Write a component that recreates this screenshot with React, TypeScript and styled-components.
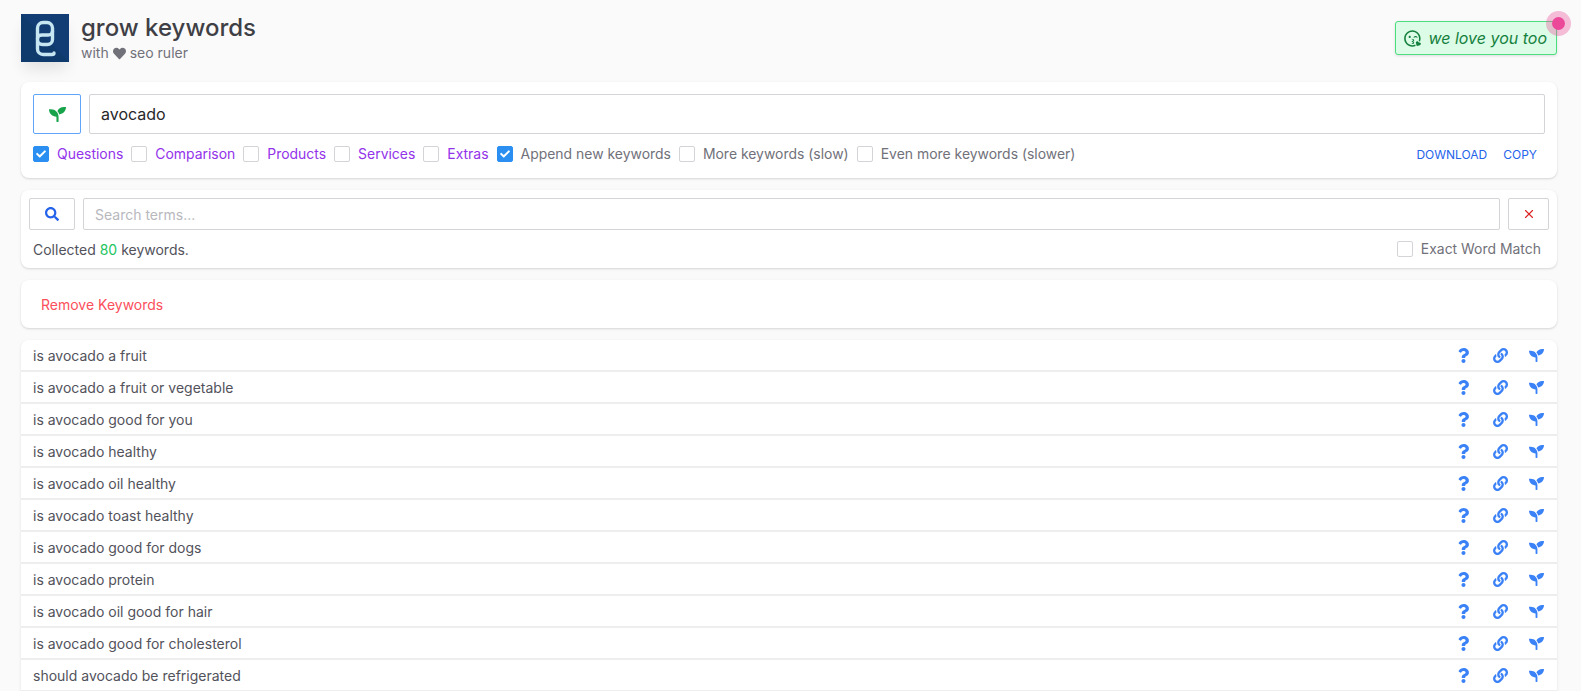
import { createGlobalStyle, styled } from 'styled-components';
import {
  FaCheck,
  FaHeart,
  FaLink,
  FaQuestion,
  FaRegKissWinkHeart,
  FaSearch,
  FaSeedling,
} from 'react-icons/fa';
import { X } from 'lucide-react';

const KEYWORDS = [
  'is avocado a fruit',
  'is avocado a fruit or vegetable',
  'is avocado good for you',
  'is avocado healthy',
  'is avocado oil healthy',
  'is avocado toast healthy',
  'is avocado good for dogs',
  'is avocado protein',
  'is avocado oil good for hair',
  'is avocado good for cholesterol',
  'should avocado be refrigerated',
];

const CATEGORIES = [
  { label: 'Questions', checked: true },
  { label: 'Comparison', checked: false },
  { label: 'Products', checked: false },
  { label: 'Services', checked: false },
  { label: 'Extras', checked: false },
];

const OPTIONS = [
  { label: 'Append new keywords', checked: true },
  { label: 'More keywords (slow)', checked: false },
  { label: 'Even more keywords (slower)', checked: false },
];

const App = () => {
  return (
    <Page>
      <GlobalStyle />
      <Header>
        <Brand>
          <Logo>
            <svg width='48' height='48' viewBox='0 0 48 48'>
              <rect width='48' height='48' fill='#113d74' />
              <path d='M0 0 L48 48 H0 Z' fill='#0f3a6c' />
              <g fill='none' stroke='#c6e6f2' strokeWidth='3.4' strokeLinecap='round'>
                <path d='M33 39 Q33 40.5 31 40.5 H22 A5.5 5.5 0 0 1 16.5 35 V14 A5.5 5.5 0 0 1 22 8.5 H26 A5.5 5.5 0 0 1 31.5 14 V25.5 A5 5 0 0 1 26.5 30.5 H21.5 A5 5 0 0 1 16.5 25.5' />
                <path d='M16.5 25 Q16.5 21 21 21 H27 Q31.5 21 31.5 17' />
              </g>
            </svg>
          </Logo>
          <div>
            <Title>grow keywords</Title>
            <Subtitle>
              with <FaHeart size={13} /> seo ruler
            </Subtitle>
          </div>
        </Brand>
        <LoveBadge>
          <FaRegKissWinkHeart size={17} />
          <span>we love you too</span>
          <Ping />
        </LoveBadge>
      </Header>

      <Card>
        <SeedRow>
          <SeedButton>
            <FaSeedling size={17} />
          </SeedButton>
          <SeedInput defaultValue='avocado' />
        </SeedRow>
        <OptionsRow>
          <OptionGroup>
            {CATEGORIES.map((item) => (
              <Option key={item.label} $accent>
                <Box $checked={item.checked}>
                  {item.checked && <FaCheck size={10} />}
                </Box>
                {item.label}
              </Option>
            ))}
            {OPTIONS.map((item) => (
              <Option key={item.label}>
                <Box $checked={item.checked}>
                  {item.checked && <FaCheck size={10} />}
                </Box>
                {item.label}
              </Option>
            ))}
          </OptionGroup>
          <Actions>
            <TextAction>DOWNLOAD</TextAction>
            <TextAction>COPY</TextAction>
          </Actions>
        </OptionsRow>
      </Card>

      <SearchCard>
        <SearchRow>
          <IconButton $wide>
            <FaSearch size={14} color='#2563eb' />
          </IconButton>
          <SearchInput placeholder='Search terms...' />
          <IconButton>
            <X size={14} color='#dc2626' strokeWidth={2} />
          </IconButton>
        </SearchRow>
        <SummaryRow>
          <span>
            Collected <Count>80</Count> keywords.
          </span>
          <Option>
            <Box />
            Exact Word Match
          </Option>
        </SummaryRow>
      </SearchCard>

      <RemoveCard>
        <RemoveButton>Remove Keywords</RemoveButton>
      </RemoveCard>

      <KeywordList>
        {KEYWORDS.map((keyword) => (
          <KeywordRow key={keyword}>
            <span>{keyword}</span>
            <RowIcons>
              <FaQuestion size={15} />
              <FaLink size={15} />
              <FaSeedling size={15} />
            </RowIcons>
          </KeywordRow>
        ))}
      </KeywordList>
    </Page>
  );
};

const GlobalStyle = createGlobalStyle`
  html, body {
    margin: 0;
    height: 691px;
    overflow: hidden;
    background: #fafafa;
    font-family: Inter, 'Liberation Sans', sans-serif;
  }
  * {
    box-sizing: border-box;
  }
`;

const Page = styled.div`
  padding: 14px 24px 0 21px;
`;

const Header = styled.header`
  display: flex;
  justify-content: space-between;
  align-items: flex-start;
  height: 68px;
`;

const Brand = styled.div`
  display: flex;
  gap: 12px;
`;

const Logo = styled.div`
  width: 48px;
  height: 48px;
  box-shadow: 0 10px 15px -3px rgba(0, 0, 0, 0.1);
`;

const Title = styled.h1`
  margin: 0;
  font-size: 24px;
  line-height: 28px;
  font-weight: 500;
  color: #3f3f46;
`;

const Subtitle = styled.div`
  display: flex;
  align-items: center;
  gap: 4px;
  margin-top: 2px;
  font-size: 14px;
  line-height: 18px;
  color: #71717a;
`;

const LoveBadge = styled.div`
  position: relative;
  display: flex;
  align-items: center;
  gap: 7px;
  height: 34px;
  margin-top: 7px;
  padding: 0 9px 0 8px;
  border: 1px solid #4ade80;
  border-radius: 3px;
  background: #dcfce7;
  color: #15803d;
  font-size: 16px;
  font-style: italic;
  box-shadow: 0 1px 3px rgba(0, 0, 0, 0.12);
`;

const Ping = styled.span`
  position: absolute;
  top: -5px;
  right: -9px;
  width: 13px;
  height: 13px;
  border-radius: 50%;
  background: #ec4899;
  box-shadow: 0 0 0 6px rgba(236, 72, 153, 0.35);
`;

const Card = styled.section`
  border-radius: 8px;
  background: #fff;
  box-shadow: 0 1px 3px rgba(0, 0, 0, 0.1), 0 1px 2px rgba(0, 0, 0, 0.06);
  padding: 12px;
  height: 96px;
`;

const SeedRow = styled.div`
  display: flex;
  gap: 8px;
`;

const SeedButton = styled.button`
  display: flex;
  align-items: center;
  justify-content: center;
  width: 48px;
  height: 40px;
  padding: 0;
  border: 1px solid #60a5fa;
  border-radius: 2px;
  background: #fff;
  color: #16a34a;
`;

const SeedInput = styled.input`
  flex: 1;
  height: 40px;
  padding: 0 11px;
  border: 1px solid #d4d4d8;
  border-radius: 2px;
  font: 400 16px Inter, sans-serif;
  color: #27272a;
  outline: none;
`;

const OptionsRow = styled.div`
  display: flex;
  justify-content: space-between;
  align-items: center;
  height: 16px;
  margin-top: 12px;
`;

const OptionGroup = styled.div`
  display: flex;
  gap: 8px;
`;

const Option = styled.label<{ $accent?: boolean }>`
  display: flex;
  align-items: center;
  gap: 8px;
  font-size: 13.95px;
  line-height: 18px;
  color: ${(props) => (props.$accent ? '#9333ea' : '#71717a')};
`;

const Box = styled.span<{ $checked?: boolean }>`
  display: flex;
  align-items: center;
  justify-content: center;
  width: 16px;
  height: 16px;
  border: 1px solid ${(props) => (props.$checked ? '#2b8ff2' : '#d4d4d8')};
  border-radius: 2px;
  background: ${(props) => (props.$checked ? '#2b8ff2' : '#fff')};
  color: #fff;
`;

const Actions = styled.div`
  display: flex;
  gap: 16px;
  padding-right: 8px;
`;

const TextAction = styled.button`
  padding: 0;
  border: none;
  background: none;
  font: 400 12px Inter, sans-serif;
  color: #2563eb;
`;

const SearchCard = styled(Card)`
  height: 78px;
  margin-top: 12px;
  padding: 8px;
`;

const SearchRow = styled.div`
  display: flex;
  gap: 8px;
`;

const IconButton = styled.button<{ $wide?: boolean }>`
  display: flex;
  align-items: center;
  justify-content: center;
  flex: none;
  width: ${(props) => (props.$wide ? '46px' : '41px')};
  height: 32px;
  padding: 0;
  border: 1px solid #d4d4d8;
  border-radius: 2px;
  background: #fff;
`;

const SearchInput = styled.input`
  flex: 1;
  height: 32px;
  padding: 0 11px;
  border: 1px solid #d4d4d8;
  border-radius: 2px;
  font: 400 14px Inter, sans-serif;
  outline: none;
  &::placeholder {
    color: #b8b8bd;
  }
`;

const SummaryRow = styled.div`
  display: flex;
  justify-content: space-between;
  align-items: center;
  height: 16px;
  margin-top: 11px;
  padding: 0 8px 0 4px;
  font-size: 14px;
  color: #52525b;
`;

const Count = styled.span`
  color: #22c55e;
`;

const RemoveCard = styled(Card)`
  display: flex;
  align-items: center;
  height: 48px;
  margin-top: 12px;
  padding: 0 20px;
`;

const RemoveButton = styled.button`
  padding: 0;
  border: none;
  background: none;
  font: 400 14px Inter, sans-serif;
  color: #fb4f5b;
`;

const KeywordList = styled.section`
  margin-top: 12px;
  border-radius: 8px 8px 0 0;
  background: #fff;
  box-shadow: 0 1px 3px rgba(0, 0, 0, 0.1);
`;

const KeywordRow = styled.div`
  display: flex;
  justify-content: space-between;
  align-items: center;
  height: 32px;
  padding: 0 12px;
  border-bottom: 2px solid #eeeeee;
  font-size: 14px;
  color: #52525b;
`;

const RowIcons = styled.div`
  display: flex;
  align-items: center;
  gap: 21.5px;
  padding-right: 1px;
  color: #3b82f6;
`;

export default App;
